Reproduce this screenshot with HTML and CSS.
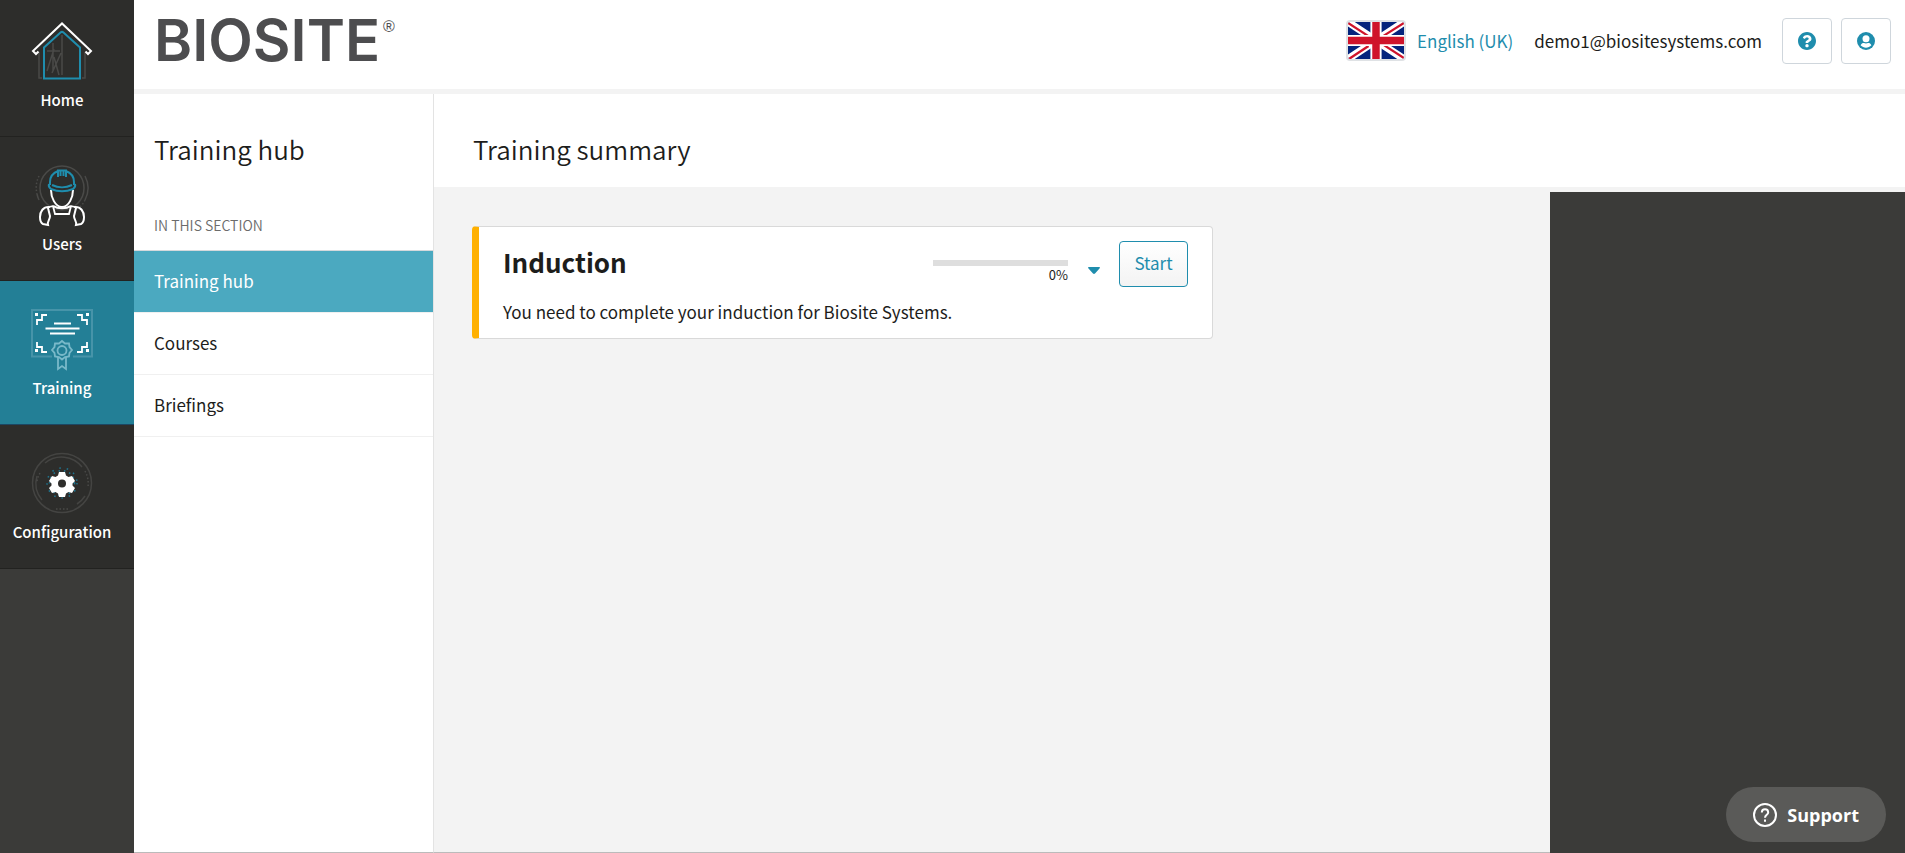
FILE: index.html
```html
<!DOCTYPE html>
<html lang="en-GB">
<head>
<meta charset="utf-8">
<title>Training hub</title>
<link rel="stylesheet" href="styles.css">
</head>
<body>
<div class="app">
  <nav class="rail" aria-label="Main">
    <a class="rail-item rail-item-home" href="#home">
      <svg class="rail-icon" viewBox="0 0 64 60" fill="none">
        <path d="M9 29v26h3M55 29v26h-3M32 12v40M17 28h13M23 20v28M31 30l-9 20M17 48l7-22M24 34l5 18" stroke="#4a4a48" stroke-width="1.500"/>
        <path d="M14 24.500 30.500 9.500q1.500-1.200 3 0L50 24.500V55.500H14Z" stroke="#1f8dad" stroke-width="2"/>
        <path d="M8.500 28.500 6 31 3 28 32 .5 61 28 58 31 55.500 28.500" stroke="#fff" stroke-width="2"/>
      </svg>
      <span>Home</span>
    </a>
    <a class="rail-item" href="#users">
      <svg class="rail-icon" viewBox="0 -4 64 64" fill="none">
        <circle cx="32" cy="20" r="22" stroke="#4a4a48" stroke-width="1.500"/>
        <path d="M55 8a26 26 0 0 1 0 24M9 32a26 26 0 0 1-2-6" stroke="#4a4a48" stroke-width="1.500"/>
        <path d="M9 8a26 26 0 0 0-2 18M55 32a26 26 0 0 1-6 8" stroke="#4a4a48" stroke-width="1.500" stroke-dasharray="1.500 2"/>
        <path d="M21 22c0 7 4 17 11 17s11-10 11-17z" fill="#2d2d2b"/>
        <path d="M21 22c0 7 4 17 11 17s11-10 11-17" stroke="#fff" stroke-width="2"/>
        <path d="M20 39c-7-1-10 5-10 10 0 4 1 6 3 7l5 1c-1-4 2-5 2-9l-2-8M44 39c7-1 10 5 10 10 0 4-1 6-3 7l-5 1c1-4-2-5-2-9l2-8" stroke="#fff" stroke-width="2"/>
        <path d="M19 39l4-1 2 8h14l2-8 4 1M24 38c3 3 13 3 16 0" stroke="#fff" stroke-width="1.800"/>
        <path d="M20 16C20 8 25 3 32 3s12 5 12 13v3c-8 5-16 5-24 0z" fill="#2d2d2b"/>
        <path d="M20 17v-3c0-6 3-9 8-11M44 17v-3c0-6-3-9-8-11M28 9V2.500h8V9M30.500 8V3M33.500 8V3M19 16c-1 3 1 4 2 5 7 3 15 3 22 0 1-1 3-2 2-5M22 17c6 3 14 3 20 0" stroke="#1f8dad" stroke-width="2"/>
      </svg>
      <span>Users</span>
    </a>
    <a class="rail-item rail-item-active" href="#training" aria-current="page">
      <svg class="rail-icon" viewBox="0 0 64 64" fill="none">
        <path d="M22 48.500H2V2h60v46.500H43" stroke="#4794a9" stroke-width="2"/>
        <path d="M7 17v-5h5V7h5M57 17v-5h-5V7h-5M7 34v5h5v5h5M57 34v5h-5v5h-5M24 15.500h17M15.500 20.500h34M20 25.500h25" stroke="#fff" stroke-width="1.800"/>
        <path d="M5 5h3v3H5zM56 5h3v3h-3zM5 41h3v3H5zM56 41h3v3h-3z" fill="#fff"/>
        <path d="M28 49v12l4-3 4 3V49" stroke="#79b9c9" stroke-width="1.800"/>
        <path d="M32 33l3 2.500h4l.5 3.500 2.500 3-2.500 3-.5 3.500-4 .5-3 2.500-3-2.500-4-.5-.5-3.500-2.500-3 2.500-3 .5-3.500h4z" fill="#237f96" stroke="#79b9c9" stroke-width="1.800"/>
        <circle cx="32" cy="42.500" r="4.500" stroke="#79b9c9" stroke-width="1.800"/>
      </svg>
      <span>Training</span>
    </a>
    <a class="rail-item" href="#configuration">
      <svg class="rail-icon" viewBox="0 1 64 64" fill="none">
        <circle cx="32" cy="32" r="29.500" stroke="#444442" stroke-width="1.500"/>
        <path d="M15 12a26 26 0 0 1 37 4M7 25a26 26 0 0 0 5 24M55 45a26 26 0 0 1-8 8" stroke="#444442" stroke-width="1.500"/>
        <path d="M55 20a26 26 0 0 1 3 16M26 58h12M7 30a26 26 0 0 1 3-8" stroke="#4a4a48" stroke-width="1.500" stroke-dasharray="1.500 2"/>
        <circle cx="32" cy="32" r="12.500" stroke="#1f7590" stroke-width="1.500" stroke-dasharray="1.500 4"/>
        <circle cx="32" cy="32" r="15" stroke="#1f7590" stroke-width="1.500" stroke-dasharray="1.500 6"/>
        <path d="M29 21h6l1 3.500 2.500 1.500 3.500-1 3 5-2.500 2.500v2L45 37l-3 5-3.500-1-2.500 1.500-1 3.500h-6l-1-3.500-2.500-1.500-3.500 1-3-5 2.500-2.500v-2L19 30l3-5 3.500 1 2.500-1.500z" fill="#fff"/>
        <circle cx="32" cy="32.500" r="4" fill="#2d2d2b"/>
      </svg>
      <span>Configuration</span>
    </a>
  </nav>

  <div class="page">
    <header class="topbar">
      <a class="brand" href="#home"><span>BIOSITE</span><span class="brand-mark">®</span></a>
      <div class="account">
        <a class="language" href="#language">
          <svg class="flag" viewBox="0 0 60 40" preserveAspectRatio="none" aria-hidden="true">
            <path fill="#04247d" d="M0 0h60v40H0z"/>
            <path d="M0 0l60 40M60 0L0 40" stroke="#fff" stroke-width="8"/>
            <path d="M0 1l26 17M34 22l26 17M60 1L38 15M22 26L1 40" stroke="#cf142b" stroke-width="2.500"/>
            <path d="M30 0v40M0 20h60" stroke="#fff" stroke-width="12"/>
            <path d="M30 0v40M0 20h60" stroke="#cf142b" stroke-width="8"/>
          </svg>
          <span>English (UK)</span>
        </a>
        <span class="email">demo1@biositesystems.com</span>
        <div class="tools">
          <button class="tool" type="button" aria-label="Help">
            <svg viewBox="8 8 496 496" width="18" height="18"><path fill="currentColor" d="M504 256c0 137-111 248-248 248S8 393 8 256 119 8 256 8s248 111 248 248zM262.700 90c-54.500 0-89.300 23-116.500 63.800-3.500 5.300-2.400 12.400 2.700 16.300l34.700 26.300c5.200 3.900 12.600 3 16.700-2.100 17.900-22.700 30.100-35.800 57.300-35.800 20.400 0 45.700 13.100 45.700 33 0 15-12.400 22.700-32.500 34C247.100 238.500 216 254.900 216 296v4c0 6.600 5.400 12 12 12h56c6.600 0 12-5.400 12-12v-1.300c0-28.500 83.200-29.600 83.200-106.700 0-58-60.200-102-116.500-102zM256 338c-25.400 0-46 20.600-46 46s20.600 46 46 46 46-20.600 46-46-20.600-46-46-46z"/></svg>
          </button>
          <button class="tool" type="button" aria-label="Account">
            <svg viewBox="0 0 18 18" width="18" height="18"><circle cx="9" cy="9" r="9" fill="currentColor"/><circle cx="9" cy="6.800" r="3.500" fill="#fff"/><path d="M3.600 13.300c.8-1.700 2.100-2.300 3.400-2.200 1.300.4 2.700.4 4 0 1.300-.1 2.600.5 3.400 2.200-3 3.200-7.800 3.200-10.800 0z" fill="#fff"/></svg>
          </button>
        </div>
      </div>
    </header>

    <div class="body">
      <aside class="section-nav">
        <h2 class="title">Training hub</h2>
        <p class="section-label">In this section</p>
        <ul class="section-list">
          <li><a class="section-link section-link-active" href="#hub" aria-current="page">Training hub</a></li>
          <li><a class="section-link" href="#courses">Courses</a></li>
          <li><a class="section-link" href="#briefings">Briefings</a></li>
        </ul>
      </aside>
      <main class="main">
        <div class="main-head"><h1 class="title">Training summary</h1></div>
        <div class="content">
          <article class="card">
            <div class="card-top">
              <h2 class="card-title">Induction</h2>
              <div class="progress">
                <div class="progress-track" role="progressbar" aria-label="Induction" aria-valuenow="0" aria-valuemin="0" aria-valuemax="100"></div>
                <span class="progress-value">0%</span>
              </div>
              <button class="expand" type="button" aria-label="Show details"><svg width="12" height="7" viewBox="0 0 12 7"><path d="M.5 0h11c.5 0 .5 1 0 1.500L7 6.500c-.6.600-1.400.6-2 0L.5 1.500C0 1 0 0 .5 0z" fill="currentColor"/></svg></button>
              <button class="start" type="button">Start</button>
            </div>
            <p class="card-text">You need to complete your induction for Biosite Systems.</p>
          </article>
        </div>
      </main>
    </div>
  </div>
</div>
<button class="support" type="button">
  <svg width="24" height="24" viewBox="0 0 24 24" fill="none" stroke="#fff" stroke-width="2"><circle cx="12" cy="12" r="11"/><path d="M8.800 9.500c0-4.300 6.400-4.300 6.400 0 0 2.300-3.200 2.500-3.200 5.300M12 16.500v2.200"/></svg>
  <span>Support</span>
</button>
</body>
</html>
```
FILE: styles.css
```css
* { box-sizing: border-box; }

body {
  margin: 0;
  background: #3b3b39;
  color: #1d1d1b;
  font-family: "Noto Sans CJK SC", "Noto Sans", sans-serif;
  font-size: 17px;
  line-height: 24px;
}

h1, h2, p, ul { margin: 0; padding: 0; }
ul { list-style: none; }
a { color: inherit; text-decoration: none; }
button { font: inherit; cursor: pointer; padding: 0; }

.app { display: flex; min-height: 100vh; }

/* Icon rail */
.rail { flex: 0 0 134px; }

.rail-item {
  display: flex;
  flex-direction: column;
  align-items: center;
  gap: 4px;
  height: 144px;
  padding: 27px 10px 0 0;
  background: #2d2d2b;
  border-bottom: 1px solid #222220;
  color: #fff;
  font-size: 15px;
  font-weight: 500;
}
.rail-item-active { background: #237f96; border-bottom-color: #1c4763; }
.rail-icon { width: 64px; height: 64px; overflow: visible; }
.rail-item-home { gap: 5px; height: 137px; padding-top: 23px; }
.rail-item-home .rail-icon { height: 60px; }

.page { flex: 1; display: flex; flex-direction: column; min-width: 0; }

/* Top bar */
.topbar {
  display: flex;
  justify-content: space-between;
  height: 94px;
  padding: 0 14px 0 20px;
  background: #fff;
  border-bottom: 5px solid #f3f3f3;
}
.brand {
  display: flex;
  align-items: flex-start;
  gap: 3px;
  color: #4d4d4f;
  font-family: Inter, sans-serif;
  font-size: 58px;
  font-weight: 600;
  line-height: 80px;
}
.brand-mark {
  padding-top: 18px;
  font-family: "Liberation Sans", sans-serif;
  font-size: 16px;
  font-weight: 400;
  line-height: 18px;
}
.account { display: flex; align-items: flex-start; }
.language { display: flex; align-items: center; gap: 11px; height: 81px; color: #1f8dad; }
.flag { width: 60px; height: 41px; border: 2px solid #dfe2e5; border-radius: 4px; }
.email { margin-left: 21px; line-height: 82px; }
.tools { display: flex; gap: 9px; margin: 18px 0 0 20px; }
.tool {
  display: flex;
  align-items: center;
  justify-content: center;
  width: 50px;
  height: 46px;
  border: 1px solid #cfd6dc;
  border-radius: 4px;
  background: #fff;
  color: #1f8dad;
}

/* Section navigation */
.body { flex: 1; display: flex; }
.section-nav {
  flex: 0 0 300px;
  background: #fff;
  border-right: 1px solid #e3e3e3;
  border-bottom: 1px solid #bbb;
}
.title { font-size: 26px; font-weight: 350; line-height: 40px; }
.section-nav .title { padding: 35px 20px 0; }
.section-label {
  padding: 44px 20px 13px;
  color: #6b6b6b;
  font-size: 14px;
  font-weight: 350;
  text-transform: uppercase;
}
.section-list { border-top: 1px solid #d5d9dc; }
.section-link {
  display: block;
  height: 62px;
  padding: 18px 20px;
  border-bottom: 1px solid #f0f0f0;
}
.section-link-active { background: #4ba9c0; color: #fff; }

/* Main panel */
.main { flex: 1; min-width: 0; display: flex; flex-direction: column; }
.main-head { height: 98px; padding: 35px 39px 0; background: #fff; border-bottom: 5px solid #f3f3f3; }
.content {
  flex: 1;
  margin-right: 355px;
  padding: 34px 38px;
  background: #f3f3f3;
  border-bottom: 1px solid #bbb;
}
.card {
  max-width: 741px;
  padding: 14px 24px 14px;
  border: 1px solid #d9d9d9;
  border-left: 7px solid #ffb000;
  border-radius: 4px;
  background: #fff;
}
.card-top { display: flex; align-items: flex-start; }
.card-title { flex: 1; font-size: 26px; font-weight: 700; line-height: 42px; }
.progress { width: 135px; padding-top: 19px; text-align: right; }
.progress-track { height: 6px; background: #dedede; }
.progress-value { display: block; font-size: 13px; line-height: 18px; }
.expand {
  display: flex;
  align-items: center;
  justify-content: center;
  width: 51px;
  height: 46px;
  padding-top: 12px;
  border: 0;
  background: none;
  color: #1f8dad;
}
.start {
  width: 69px;
  height: 46px;
  padding-bottom: 2px;
  border: 1px solid #1f8dad;
  border-radius: 4px;
  background: linear-gradient(#fff, #f3f3f3);
  color: #1f8dad;
}
.card-text { margin-top: 13px; }

.support {
  position: fixed;
  right: 19px;
  bottom: 11px;
  display: flex;
  align-items: center;
  gap: 10px;
  height: 55px;
  padding: 0 27px;
  border: 0;
  border-radius: 28px;
  background: #5a5a58;
  color: #fff;
  font-family: "Open Sans", sans-serif;
  font-size: 18px;
  font-weight: 700;
}
```
